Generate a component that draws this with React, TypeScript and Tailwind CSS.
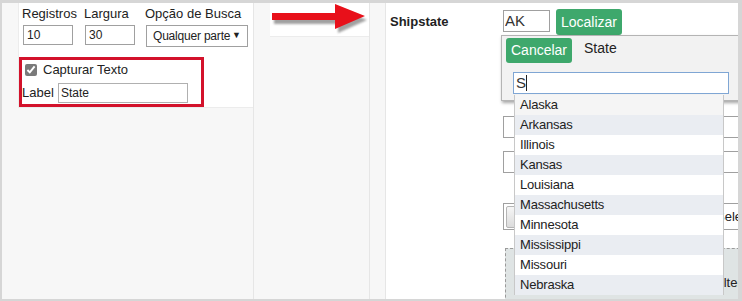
import React from 'react';

const states = [
  'Alaska',
  'Arkansas',
  'Illinois',
  'Kansas',
  'Louisiana',
  'Massachusetts',
  'Minnesota',
  'Mississippi',
  'Missouri',
  'Nebraska',
];

const font = { fontFamily: '"Liberation Sans", Arial, sans-serif' };

const Arrow: React.FC = () => (
  <svg width="99" height="34" viewBox="0 0 99 34">
    <defs>
      <filter id="sh" x="-10%" y="-30%" width="130%" height="180%">
        <feGaussianBlur stdDeviation="1.2" />
      </filter>
    </defs>
    <g transform="translate(2 3)" fill="#8a8a8a" filter="url(#sh)" opacity="0.8">
      <polygon points="2,11 66,11 66,2 95,14 66,27 66,18 2,18" />
    </g>
    <polygon points="2,10 65,10 65,1 95,13 65,26 65,17 2,17" fill="#e8101a" />
  </svg>
);

export default function App() {
  return (
    <div
      className="w-[742px] h-[301px] overflow-hidden border-t-[3px] border-l-2 border-b-2 border-r-4 border-[#d6d6d6] flex text-[13px] text-[#222]"
      style={font}
    >
      {/* painel esquerdo */}
      <div className="w-[252px] shrink-0 bg-[#f7f7f7] border-r border-[#e6e6e6] pl-4">
        <div className="w-[235px] h-[105px] bg-white border-b border-l border-[#ececec] pt-[3px] pl-[3px]">
          <div className="flex">
            <div className="flex flex-col w-[62px]">
              <span className="leading-[16px]">Registros</span>
              <input
                defaultValue="10"
                className="mt-[3px] ml-[1px] w-[50px] h-[20px] border border-[#a0a0a0] px-[3px] text-[12px] outline-none"
              />
            </div>
            <div className="flex flex-col w-[61px]">
              <span className="leading-[16px]">Largura</span>
              <input
                defaultValue="30"
                className="mt-[3px] ml-[1px] w-[50px] h-[20px] border border-[#a0a0a0] px-[3px] text-[12px] outline-none"
              />
            </div>
            <div className="flex flex-col">
              <span className="leading-[16px]">Opção de Busca</span>
              <div className="mt-[3px] ml-[1px] w-[102px] h-[22px] border border-[#a0a0a0] flex items-center justify-between pl-[6px] pr-[6px] text-[12px] whitespace-nowrap">
                <span className="tracking-[-0.2px]">Qualquer parte</span>
                <span className="text-[9px]">▼</span>
              </div>
            </div>
          </div>
          <div className="mt-[10px] -ml-[3px] w-[185px] h-[50px] border-[3px] border-[#d3122b] pt-[2px] pl-[2px]">
            <div className="flex items-center gap-[6px] h-[16px] pl-[1px]">
              <input type="checkbox" defaultChecked className="w-[12px] h-[12px] m-0 accent-[#7a7a7a]" />
              <span>Capturar Texto</span>
            </div>
            <div className="flex items-center mt-[5px] -ml-[2px]">
              <span className="w-[36px]">Label</span>
              <input
                defaultValue="State"
                className="w-[130px] h-[20px] border border-[#b0b0b0] px-[2px] text-[12px] outline-none"
              />
            </div>
          </div>
        </div>
      </div>

      {/* coluna da seta */}
      <div className="w-[116px] shrink-0 bg-[#f7f7f7] border-r border-[#e6e6e6] pl-4">
        <div className="w-[99px] h-[34px] bg-white border-b border-[#ececec]">
          <Arrow />
        </div>
      </div>
      <div className="w-[16px] shrink-0 bg-[#f7f7f7] border-r border-[#e6e6e6]" />

      {/* painel direito */}
      <div className="relative flex-1 bg-white">
        <div className="flex items-start pt-[6px] pl-[4px]">
          <span className="w-[113px] font-bold pt-[3px]">Shipstate</span>
          <input
            defaultValue="AK"
            className="mt-[1px] w-[47px] h-[22px] border border-[#a0a0a0] px-[1px] text-[15px] text-[#333] outline-none"
          />
          <button className="ml-[6px] w-[66px] h-[26px] rounded-[3px] bg-[#3ea86c] text-white text-[14px]">
            Localizar
          </button>
        </div>

        {/* campos ao fundo */}
        <div className="flex flex-col pl-[117px]">
          <div className="mt-[81px] w-[260px] h-[22px] border border-[#a0a0a0]" />
          <div className="mt-[13px] w-[260px] h-[22px] border border-[#a0a0a0]" />
          <div className="mt-[30px] w-[260px] h-[27px] border border-[#a0a0a0] flex items-center pl-[2px] whitespace-nowrap">
            <div className="w-[60px] h-[22px] shrink-0 rounded-[2px] border border-[#b5b5b5] bg-gradient-to-b from-[#f6f6f6] to-[#dcdcdc]" />
            <span className="ml-[150px]">Selecionar</span>
          </div>
          <div className="mt-[18px] ml-[2px] w-[260px] h-[60px] border border-dashed border-[#9a9a9a] bg-[#dfe4e4] pt-[24px] pl-[209px] whitespace-nowrap">
            Alterar
          </div>
        </div>

        {/* painel suspenso */}
        <div className="absolute left-[115px] top-[32px] w-[240px] h-[66px] bg-[#f2f2f2] border border-[#b4b4b4] shadow-[1px_2px_3px_rgba(0,0,0,0.35)]">
          <div className="flex items-center pt-[2px] pl-[4px]">
            <button className="w-[66px] h-[25px] rounded-[3px] bg-[#3ea86c] text-white text-[14px]">
              Cancelar
            </button>
            <span className="ml-[12px] -mt-[4px] text-[14px]">State</span>
          </div>
          <div className="mt-[9px] ml-[11px] w-[216px] h-[22px] border border-[#7fa6d4] bg-white flex items-center pl-[2px] text-[15px] text-[#333]">
            S<span className="w-px h-[16px] bg-[#222]" />
          </div>
        </div>

        {/* lista */}
        <ul className="absolute left-[128px] top-[92px] w-[210px] border-l border-r border-[#c8c8c8]">
          {states.map((s, i) => (
            <li
              key={s}
              className={`h-[20px] leading-[20px] pl-[5px] text-[13px] tracking-[-0.2px] ${
                i === 0 ? 'bg-[#f5f5f5]' : i % 2 === 1 ? 'bg-[#eaedf2]' : 'bg-white'
              }`}
            >
              {s}
            </li>
          ))}
        </ul>
      </div>
    </div>
  );
}
